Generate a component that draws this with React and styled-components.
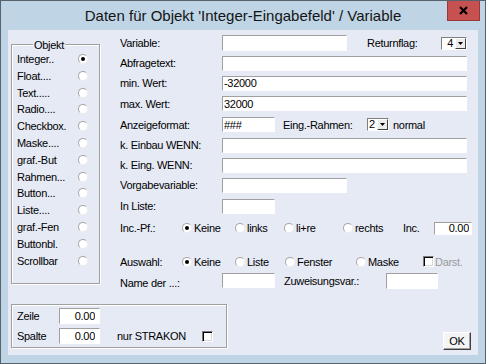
import React from "react";
import styled, { createGlobalStyle } from "styled-components";

const GlobalStyle = createGlobalStyle`
  html, body { margin: 0; padding: 0; }
  body {
    width: 486px; height: 364px; overflow: hidden; background: #fff;
    font-family: "Liberation Sans", Arial, sans-serif;
  }
`;

const Window = styled.div`
  width: 486px; height: 364px; box-sizing: border-box;
  border: 1px solid #56626c;
  background: #bfd5e6;
  display: flex; flex-direction: column;
`;

const TitleBar = styled.div`
  height: 29px; flex: none;
  display: grid; grid-template-columns: 1fr auto 1fr; align-items: start;
`;

const Title = styled.div`
  grid-column: 2;
  font: 15px/29px "Liberation Sans", Arial, sans-serif;
  color: #141414; white-space: nowrap;
`;

const CloseButton = styled.div`
  grid-column: 3; justify-self: end;
  margin-right: 5px; width: 33px; height: 20px; box-sizing: border-box;
  background: #c75050; border: 1px solid #983838; border-top: none;
  display: flex; align-items: center; justify-content: center;
`;

const Client = styled.div`
  flex: 1; margin: 0 7px 8px 7px;
  background: #e6eaf5;
  display: flex; flex-direction: column;
  font-size: 11px; letter-spacing: -0.3px; color: #000;
`;

const TopArea = styled.div`
  display: flex; align-items: flex-start; height: 260px;
`;

const Etched = styled.div`
  position: relative; box-sizing: border-box;
  border: 1px solid #a0a0a0;
  box-shadow: inset 1px 1px 0 #fff, 1px 1px 0 #fff;
`;

const ObjGroup = styled(Etched)`
  margin: 14px 0 0 3px; width: 89px; height: 240px;
  padding: 5.6px 0 0 5px;
`;

const Legend = styled.span`
  position: absolute; top: -6px; left: 21px;
  padding: 0 1px; background: #e6eaf5; line-height: 13px;
`;

const ObjRow = styled.div`
  display: flex; align-items: center; height: 16.8px;
`;

const ObjLabel = styled.span`
  width: 61px; flex: none; white-space: nowrap;
`;

const Radio = styled.span`
  flex: none; width: 10px; height: 10px; box-sizing: border-box;
  border-radius: 50%; background: #fff;
  border: 1px solid; border-color: #a6a6a6 #eeeeee #eeeeee #a6a6a6;
  display: inline-flex; align-items: center; justify-content: center;
  &::after {
    content: ""; width: 4px; height: 4px; border-radius: 50%;
    background: #000; display: ${(p) => (p.$checked ? "block" : "none")};
  }
`;

const Form = styled.div`
  margin: 3px 0 0 20px; width: 358px;
  display: flex; flex-direction: column;
`;

const Row = styled.div`
  display: flex; align-items: center;
  height: ${(p) => p.$h || 20}px;
  margin-top: ${(p) => p.$mt || 0}px;
`;

const Label = styled.span`
  flex: none; white-space: nowrap;
  width: ${(p) => (p.$w ? `${p.$w}px` : "auto")};
  margin-left: ${(p) => p.$ml || 0}px;
  padding-top: ${(p) => p.$dy || 0}px;
  color: ${(p) => (p.$disabled ? "#9a9a9a" : "#000")};
`;

const Field = styled.input`
  flex: none; box-sizing: border-box;
  width: ${(p) => p.$w}px; height: ${(p) => p.$h || 15}px;
  margin: 0 0 0 ${(p) => p.$ml || 0}px;
  padding: 0 ${(p) => (p.$right ? p.$pr || 3 : 1)}px 0 1px;
  border: 1px solid; border-color: #a0a0a0 #fff #fff #a0a0a0;
  background: #fff; color: #000; outline: none;
  font: 11px "Liberation Sans", Arial, sans-serif; letter-spacing: -0.3px;
  text-align: ${(p) => (p.$right ? "right" : "left")};
`;

const Combo = styled.div`
  flex: none; display: flex; box-sizing: border-box;
  width: ${(p) => p.$w}px; height: 13px;
  border: 1px solid; border-color: #808080 #fff #fff #808080;
  background: #fff;
`;

const ComboValue = styled.span`
  flex: 1; line-height: 11px;
  text-align: ${(p) => (p.$right ? "right" : "left")};
  padding: 0 2px 0 1px;
`;

const ComboButton = styled.span`
  flex: none; width: 11px; box-sizing: border-box;
  background: #ececec;
  border: 1px solid; border-color: #fff #404040 #404040 #fff;
  display: flex; align-items: center; justify-content: center;
`;

const Option = styled.span`
  flex: none; width: ${(p) => p.$w}px;
  display: flex; align-items: center; gap: 2px; white-space: nowrap;
`;

const Check = styled.span`
  flex: none; width: 11px; height: 11px; box-sizing: border-box;
  margin-left: ${(p) => p.$ml || 0}px;
  background: #fff;
  border: 1px solid; border-color: #7a7a7a #fff #fff #7a7a7a;
  box-shadow: inset 1px 1px 0 #000, inset -1px -1px 0 #d8d8d8;
`;

const BottomArea = styled.div`
  display: flex; align-items: flex-start; margin-top: 14px;
`;

const PosGroup = styled(Etched)`
  margin-left: 3px; width: 216px; height: 44px;
  padding: 1px 0 0 5px;
  display: flex; flex-direction: column;
`;

const OkButton = styled.button`
  margin: 28px 7px 0 auto; width: 28px; height: 18px; padding: 0;
  box-sizing: border-box; background: #f4f4f4;
  border: 1px solid; border-color: #fff #404040 #404040 #fff;
  box-shadow: inset -1px -1px 0 #a0a0a0;
  font: 11px "Liberation Sans", Arial, sans-serif; letter-spacing: -0.3px; color: #000;
`;

const Arrow = () => (
  <svg width="5" height="3" viewBox="0 0 5 3">
    <path d="M0 0H5L2.5 3Z" fill="#000" />
  </svg>
);

const Dropdown = ({ w, value, right }) => (
  <Combo $w={w}>
    <ComboValue $right={right}>{value}</ComboValue>
    <ComboButton><Arrow /></ComboButton>
  </Combo>
);

const objects = [
  "Integer..", "Float....", "Text.....", "Radio....", "Checkbox.", "Maske....",
  "graf.-But", "Rahmen...", "Button...", "Liste....", "graf.-Fen", "Buttonbl.", "Scrollbar",
];

export default function App() {
  return (
    <>
      <GlobalStyle />
      <Window>
        <TitleBar>
          <Title>Daten für Objekt 'Integer-Eingabefeld' / Variable</Title>
          <CloseButton>
            <svg width="9" height="9" viewBox="0 0 9 9">
              <path d="M1 1L8 8M8 1L1 8" stroke="#000" strokeWidth="2.2" />
            </svg>
          </CloseButton>
        </TitleBar>
        <Client>
          <TopArea>
            <ObjGroup>
              <Legend>Objekt</Legend>
              {objects.map((o, i) => (
                <ObjRow key={o}>
                  <ObjLabel>{o}</ObjLabel>
                  <Radio $checked={i === 0} />
                </ObjRow>
              ))}
            </ObjGroup>
            <Form>
              <Row>
                <Label $w={102}>Variable:</Label>
                <Field $w={125} $h={16} readOnly value="" />
                <Label $w={74} $ml={20}>Returnflag:</Label>
                <Dropdown w={26} value="4" right />
              </Row>
              <Row>
                <Label $w={102}>Abfragetext:</Label>
                <Field $w={245} readOnly value="" />
              </Row>
              <Row>
                <Label $w={102}>min. Wert:</Label>
                <Field $w={245} readOnly value="-32000" />
              </Row>
              <Row $h={21}>
                <Label $w={102}>max. Wert:</Label>
                <Field $w={245} readOnly value="32000" />
              </Row>
              <Row $h={21}>
                <Label $w={102}>Anzeigeformat:</Label>
                <Field $w={53} readOnly value="###" />
                <Label $w={84} $ml={8}>Eing.-Rahmen:</Label>
                <Dropdown w={22} value="2" />
                <Label $ml={4}>normal</Label>
              </Row>
              <Row>
                <Label $w={102}>k. Einbau WENN:</Label>
                <Field $w={245} readOnly value="" />
              </Row>
              <Row>
                <Label $w={102}>k. Eing. WENN:</Label>
                <Field $w={245} readOnly value="" />
              </Row>
              <Row>
                <Label $w={102}>Vorgabevariable:</Label>
                <Field $w={125} readOnly value="" />
              </Row>
              <Row $h={22}>
                <Label $w={102}>In Liste:</Label>
                <Field $w={53} readOnly value="" />
              </Row>
              <Row $h={22}>
                <Label $w={62}>Inc.-Pf.:</Label>
                <Option $w={53}><Radio $checked />Keine</Option>
                <Option $w={49}><Radio />links</Option>
                <Option $w={59}><Radio />li+re</Option>
                <Option $w={60}><Radio />rechts</Option>
                <Label $w={31}>Inc.</Label>
                <Field $w={38} $h={13} $right $pr={2} readOnly value="0.00" />
              </Row>
              <Row $h={19} $mt={13}>
                <Label $w={62}>Auswahl:</Label>
                <Option $w={53}><Radio $checked />Keine</Option>
                <Option $w={50}><Radio />Liste</Option>
                <Option $w={71}><Radio />Fenster</Option>
                <Option $w={67}><Radio />Maske</Option>
                <Check />
                <Label $ml={1} $disabled>Darst.</Label>
              </Row>
              <Row $h={19}>
                <Label $w={102} $dy={5}>Name der ...:</Label>
                <Field $w={53} readOnly value="" />
                <Label $w={102} $ml={9}>Zuweisungsvar.:</Label>
                <Field $w={52} $h={16} readOnly value="" />
              </Row>
            </Form>
          </TopArea>
          <BottomArea>
            <PosGroup>
              <Row>
                <Label $w={42}>Zeile</Label>
                <Field $w={41} $h={16} $right $pr={4} readOnly value="0.00" />
              </Row>
              <Row>
                <Label $w={42}>Spalte</Label>
                <Field $w={41} $h={16} $right $pr={4} readOnly value="0.00" />
                <Label $w={85} $ml={17}>nur STRAKON</Label>
                <Check />
              </Row>
            </PosGroup>
            <OkButton type="button">OK</OkButton>
          </BottomArea>
        </Client>
      </Window>
    </>
  );
}
